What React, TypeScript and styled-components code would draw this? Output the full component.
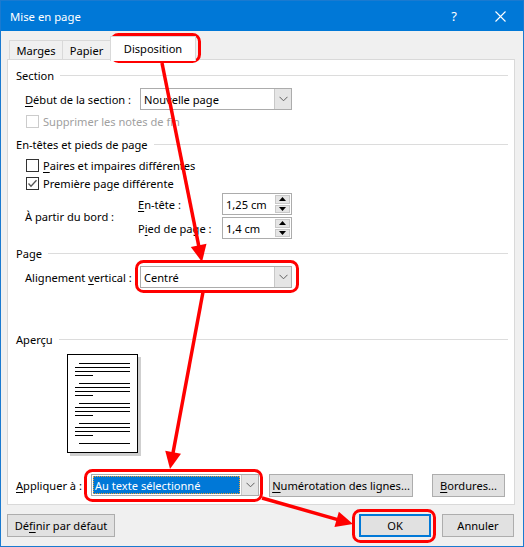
import React from 'react'
import styled, {createGlobalStyle} from 'styled-components'

const GlobalStyle = createGlobalStyle`
  html, body {
    margin: 0;
    padding: 0;
    background: #fff;
  }
  body {
    font-family: "Segoe UI", "Noto Sans", "DejaVu Sans", sans-serif;
    font-size: 11.1px;
    color: #000;
  }
`

const Window = styled.div`
  position: relative;
  width: 524px;
  height: 547px;
  box-sizing: border-box;
  border: 1px solid #1a7ad0;
  background: #f0f0f0;
  display: flex;
  flex-direction: column;
`

const TitleBar = styled.div`
  height: 30px;
  flex-shrink: 0;
  background: #0078d7;
  color: #fff;
  display: flex;
  align-items: center;
  padding-left: 9px;
`

const TitleText = styled.div`
  flex: 1;
  font-size: 11.3px;
`

const TitleButton = styled.div`
  width: 46px;
  height: 30px;
  display: flex;
  align-items: center;
  justify-content: center;
  font-size: 13px;
`

const Body = styled.div`
  flex: 1;
  padding: 0 8px 0 6px;
  display: flex;
  flex-direction: column;
`

const TabStrip = styled.div`
  height: 29px;
  display: flex;
  align-items: flex-end;
  padding-left: 2px;
  position: relative;
  z-index: 1;
`

const Tab = styled.div<{ $w: number; $active?: boolean }>`
  width: ${p => p.$w}px;
  height: ${p => (p.$active ? 25 : 20)}px;
  box-sizing: border-box;
  margin-left: -1px;
  margin-bottom: ${p => (p.$active ? -1 : 0)}px;
  border: 1px solid #d9d9d9;
  border-bottom: ${p => (p.$active ? 'none' : '1px solid #d9d9d9')};
  background: ${p => (p.$active ? '#fff' : '#f0f0f0')};
  display: flex;
  align-items: center;
  justify-content: center;
  padding-bottom: ${p => (p.$active ? 2 : 0)}px;
  padding-top: ${p => (p.$active ? 0 : 1)}px;

  &:first-child {
    margin-left: 0;
  }
`

const Panel = styled.div`
  height: 446px;
  box-sizing: border-box;
  margin-top: -1px;
  border: 1px solid #d9d9d9;
  background: #fff;
  padding: 0 6px 0 8px;
  display: flex;
  flex-direction: column;
`

const GroupHeader = styled.div<{ $mt: number }>`
  height: 16px;
  margin-top: ${p => p.$mt}px;
  display: flex;
  align-items: center;

  &::after {
    content: '';
    flex: 1;
    height: 1px;
    margin-left: 6px;
    background: #dcdcdc;
  }
`

const Row = styled.div<{ $mt: number; $h?: number; $indent?: number }>`
  height: ${p => p.$h ?? 22}px;
  margin-top: ${p => p.$mt}px;
  padding-left: ${p => p.$indent ?? 0}px;
  display: flex;
  align-items: center;
`

const FieldLabel = styled.div<{ $w: number }>`
  width: ${p => p.$w}px;
  flex-shrink: 0;
  white-space: nowrap;
`

const Key = styled.span`
  text-decoration: underline;
  text-underline-offset: 2px;
`

const Combo = styled.div<{ $w: number }>`
  width: ${p => p.$w}px;
  height: 22px;
  box-sizing: border-box;
  border: 1px solid #acacac;
  background: #fff;
  display: flex;
  flex-shrink: 0;
`

const ComboValue = styled.div<{ $selected?: boolean }>`
  flex: 1;
  margin: 1px;
  padding-left: 2px;
  display: flex;
  align-items: center;
  background: ${p => (p.$selected ? '#0078d7' : 'transparent')};
  color: ${p => (p.$selected ? '#fff' : '#000')};
  outline: ${p => (p.$selected ? '1px dotted #f0a030' : 'none')};
  outline-offset: -1px;
`

const ComboArrow = styled.div`
  width: 16px;
  background: #e5e5e5;
  border-left: 1px solid #c8c8c8;
  display: flex;
  align-items: center;
  justify-content: center;
`

const CheckBox = styled.div<{ $disabled?: boolean }>`
  width: 13px;
  height: 13px;
  box-sizing: border-box;
  border: 1px solid ${p => (p.$disabled ? '#cccccc' : '#333333')};
  background: #fff;
  display: flex;
  align-items: center;
  justify-content: center;
  flex-shrink: 0;
`

const CheckLabel = styled.div<{ $disabled?: boolean }>`
  margin-left: 4px;
  color: ${p => (p.$disabled ? '#a0a0a0' : '#000')};
  white-space: nowrap;
`

const BordBlock = styled.div`
  margin-top: 2px;
  padding-left: 9px;
  display: flex;
  align-items: center;
`

const SpinColumn = styled.div`
  display: flex;
  flex-direction: column;
  gap: 2px;
`

const Spin = styled.div`
  width: 70px;
  height: 22px;
  box-sizing: border-box;
  border: 1px solid #acacac;
  background: #fff;
  display: flex;
`

const SpinValue = styled.div`
  flex: 1;
  padding-left: 3px;
  display: flex;
  align-items: center;
`

const SpinButtons = styled.div`
  width: 15px;
  padding: 1px 1px 1px 0;
  display: flex;
  flex-direction: column;
  gap: 1px;
`

const SpinButton = styled.div`
  flex: 1;
  background: #e5e5e5;
  border: 1px solid #c8c8c8;
  display: flex;
  align-items: center;
  justify-content: center;
`

const Preview = styled.svg`
  margin-top: 7px;
  margin-left: 51px;
  display: block;
`

const PushButton = styled.button<{ $w: number; $default?: boolean }>`
  width: ${p => p.$w}px;
  height: 23px;
  box-sizing: border-box;
  padding: 0;
  flex-shrink: 0;
  background: #e1e1e1;
  border: ${p => (p.$default ? '2px solid #0078d7' : '1px solid #adadad')};
  font: inherit;
  color: #000;
  white-space: nowrap;
`

const Footer = styled.div`
  margin-top: 9px;
  padding-right: 1px;
  display: flex;
  gap: 11px;
`

const Spacer = styled.div`
  flex: 1;
`

const Annotations = styled.svg`
  position: absolute;
  top: -1px;
  left: -1px;
  pointer-events: none;
`

function Chevron() {
  return (
    <svg width="9" height="6" viewBox="0 0 9 6">
      <polyline points="0.5,0.8 4.5,4.8 8.5,0.8" fill="none" stroke="#606060" strokeWidth="1" />
    </svg>
  )
}

function Tick() {
  return (
    <svg width="11" height="11" viewBox="0 0 11 11">
      <polyline points="1.5,5.5 4,8.2 9.5,2.2" fill="none" stroke="#555" strokeWidth="1.3" />
    </svg>
  )
}

function Triangle({up}: { up?: boolean }) {
  return (
    <svg width="7" height="4" viewBox="0 0 7 4">
      <polygon points={up ? '0,4 7,4 3.5,0' : '0,0 7,0 3.5,4'} fill="#000" />
    </svg>
  )
}

function SpinBox({value}: { value: string }) {
  return (
    <Spin>
      <SpinValue>{value}</SpinValue>
      <SpinButtons>
        <SpinButton><Triangle up /></SpinButton>
        <SpinButton><Triangle /></SpinButton>
      </SpinButtons>
    </Spin>
  )
}

function PageThumb() {
  const groups = [364, 384, 404, 424]
  return (
    <Preview width="74" height="102" viewBox="0 0 74 102">
      <rect x="3" y="3" width="71" height="99" fill="#cfcfcf" />
      <rect x="0.5" y="0.5" width="70" height="98" fill="#fff" stroke="#000" />
      {groups.map(g => {
        const y = g - 355
        return (
          <g key={g} stroke="#000" strokeWidth="1">
            <line x1="12" y1={y + 0.5} x2="63" y2={y + 0.5} />
            <line x1="8" y1={y + 4.5} x2="63" y2={y + 4.5} />
            <line x1="8" y1={y + 8.5} x2="63" y2={y + 8.5} />
            <line x1="8" y1={y + 12.5} x2="26" y2={y + 12.5} />
          </g>
        )
      })}
      <line x1="12" y1="89.5" x2="63" y2="89.5" stroke="#000" />
    </Preview>
  )
}

function arrow(x1: number, y1: number, x2: number, y2: number) {
  const dx = x2 - x1
  const dy = y2 - y1
  const len = Math.hypot(dx, dy)
  const ux = dx / len
  const uy = dy / len
  const hl = 17
  const hw = 8
  const bx = x2 - ux * hl
  const by = y2 - uy * hl
  return {
    line: [x1, y1, bx + ux * 2, by + uy * 2],
    head: `${x2},${y2} ${bx - uy * hw},${by + ux * hw} ${bx + uy * hw},${by - ux * hw}`,
  }
}

const frames = [
  {x: 111.5, y: 34.5, w: 88, h: 27},
  {x: 136.5, y: 261.5, w: 161, h: 30},
  {x: 85.5, y: 470.5, w: 176, h: 30},
  {x: 353.5, y: 510.5, w: 81, h: 31},
]

const arrows = [
  arrow(162, 63, 202, 262),
  arrow(203, 292, 170, 469),
  arrow(262, 498, 353, 524),
]

export default function App() {
  return (
    <>
      <GlobalStyle />
      <Window>
        <TitleBar>
          <TitleText>Mise en page</TitleText>
          <TitleButton>?</TitleButton>
          <TitleButton>
            <svg width="11" height="11" viewBox="0 0 11 11">
              <path d="M0.5 0.5 L10.5 10.5 M10.5 0.5 L0.5 10.5" stroke="#fff" strokeWidth="1.1" />
            </svg>
          </TitleButton>
        </TitleBar>
        <Body>
          <TabStrip>
            <Tab $w={54}>Marges</Tab>
            <Tab $w={49}>Papier</Tab>
            <Tab $w={86} $active>Disposition</Tab>
          </TabStrip>
          <Panel>
            <GroupHeader $mt={7}>Section</GroupHeader>
            <Row $mt={5} $indent={9}>
              <FieldLabel $w={115}><Key>D</Key>ébut de la section :</FieldLabel>
              <Combo $w={152}>
                <ComboValue>Nouvelle page</ComboValue>
                <ComboArrow><Chevron /></ComboArrow>
              </Combo>
            </Row>
            <Row $mt={3} $h={16} $indent={10}>
              <CheckBox $disabled />
              <CheckLabel $disabled>Supprimer les notes de fin</CheckLabel>
            </Row>

            <GroupHeader $mt={7}>En-têtes et pieds de page</GroupHeader>
            <Row $mt={5} $h={16} $indent={10}>
              <CheckBox />
              <CheckLabel><Key>P</Key>aires et impaires différentes</CheckLabel>
            </Row>
            <Row $mt={2} $h={16} $indent={10}>
              <CheckBox><Tick /></CheckBox>
              <CheckLabel>Première pa<Key>g</Key>e différente</CheckLabel>
            </Row>
            <BordBlock>
              <FieldLabel $w={113}>À partir du bord :</FieldLabel>
              <SpinColumn>
                <Row $mt={0}>
                  <FieldLabel $w={84}><Key>E</Key>n-tête :</FieldLabel>
                  <SpinBox value="1,25 cm" />
                </Row>
                <Row $mt={0}>
                  <FieldLabel $w={84}>P<Key>i</Key>ed de page :</FieldLabel>
                  <SpinBox value="1,4 cm" />
                </Row>
              </SpinColumn>
            </BordBlock>

            <GroupHeader $mt={6}>Page</GroupHeader>
            <Row $mt={5} $indent={9}>
              <FieldLabel $w={115}>Alignement <Key>v</Key>ertical :</FieldLabel>
              <Combo $w={152}>
                <ComboValue>Centré</ComboValue>
                <ComboArrow><Chevron /></ComboArrow>
              </Combo>
            </Row>

            <GroupHeader $mt={43}>Aperçu</GroupHeader>
            <PageThumb />

            <Row $mt={18}>
              <FieldLabel $w={75}><Key>A</Key>ppliquer à :</FieldLabel>
              <Combo $w={168}>
                <ComboValue $selected>Au texte sélectionné</ComboValue>
                <ComboArrow><Chevron /></ComboArrow>
              </Combo>
              <PushButton $w={144} style={{marginLeft: 10}}><Key>N</Key>umérotation des lignes...</PushButton>
              <PushButton $w={73} style={{marginLeft: 19}}><Key>B</Key>ordures...</PushButton>
            </Row>
          </Panel>
          <Footer>
            <PushButton $w={108}>Dé<Key>f</Key>inir par défaut</PushButton>
            <Spacer />
            <PushButton $w={72} $default>OK</PushButton>
            <PushButton $w={72}>Annuler</PushButton>
          </Footer>
        </Body>
        <Annotations width="524" height="547" viewBox="0 0 524 547">
          {frames.map((f, i) => (
            <rect key={i} x={f.x} y={f.y} width={f.w} height={f.h} rx="7" fill="none" stroke="#f00" strokeWidth="3" />
          ))}
          {arrows.map((a, i) => (
            <g key={i}>
              <line x1={a.line[0]} y1={a.line[1]} x2={a.line[2]} y2={a.line[3]} stroke="#f00" strokeWidth="3.5" />
              <polygon points={a.head} fill="#f00" />
            </g>
          ))}
        </Annotations>
      </Window>
    </>
  )
}
